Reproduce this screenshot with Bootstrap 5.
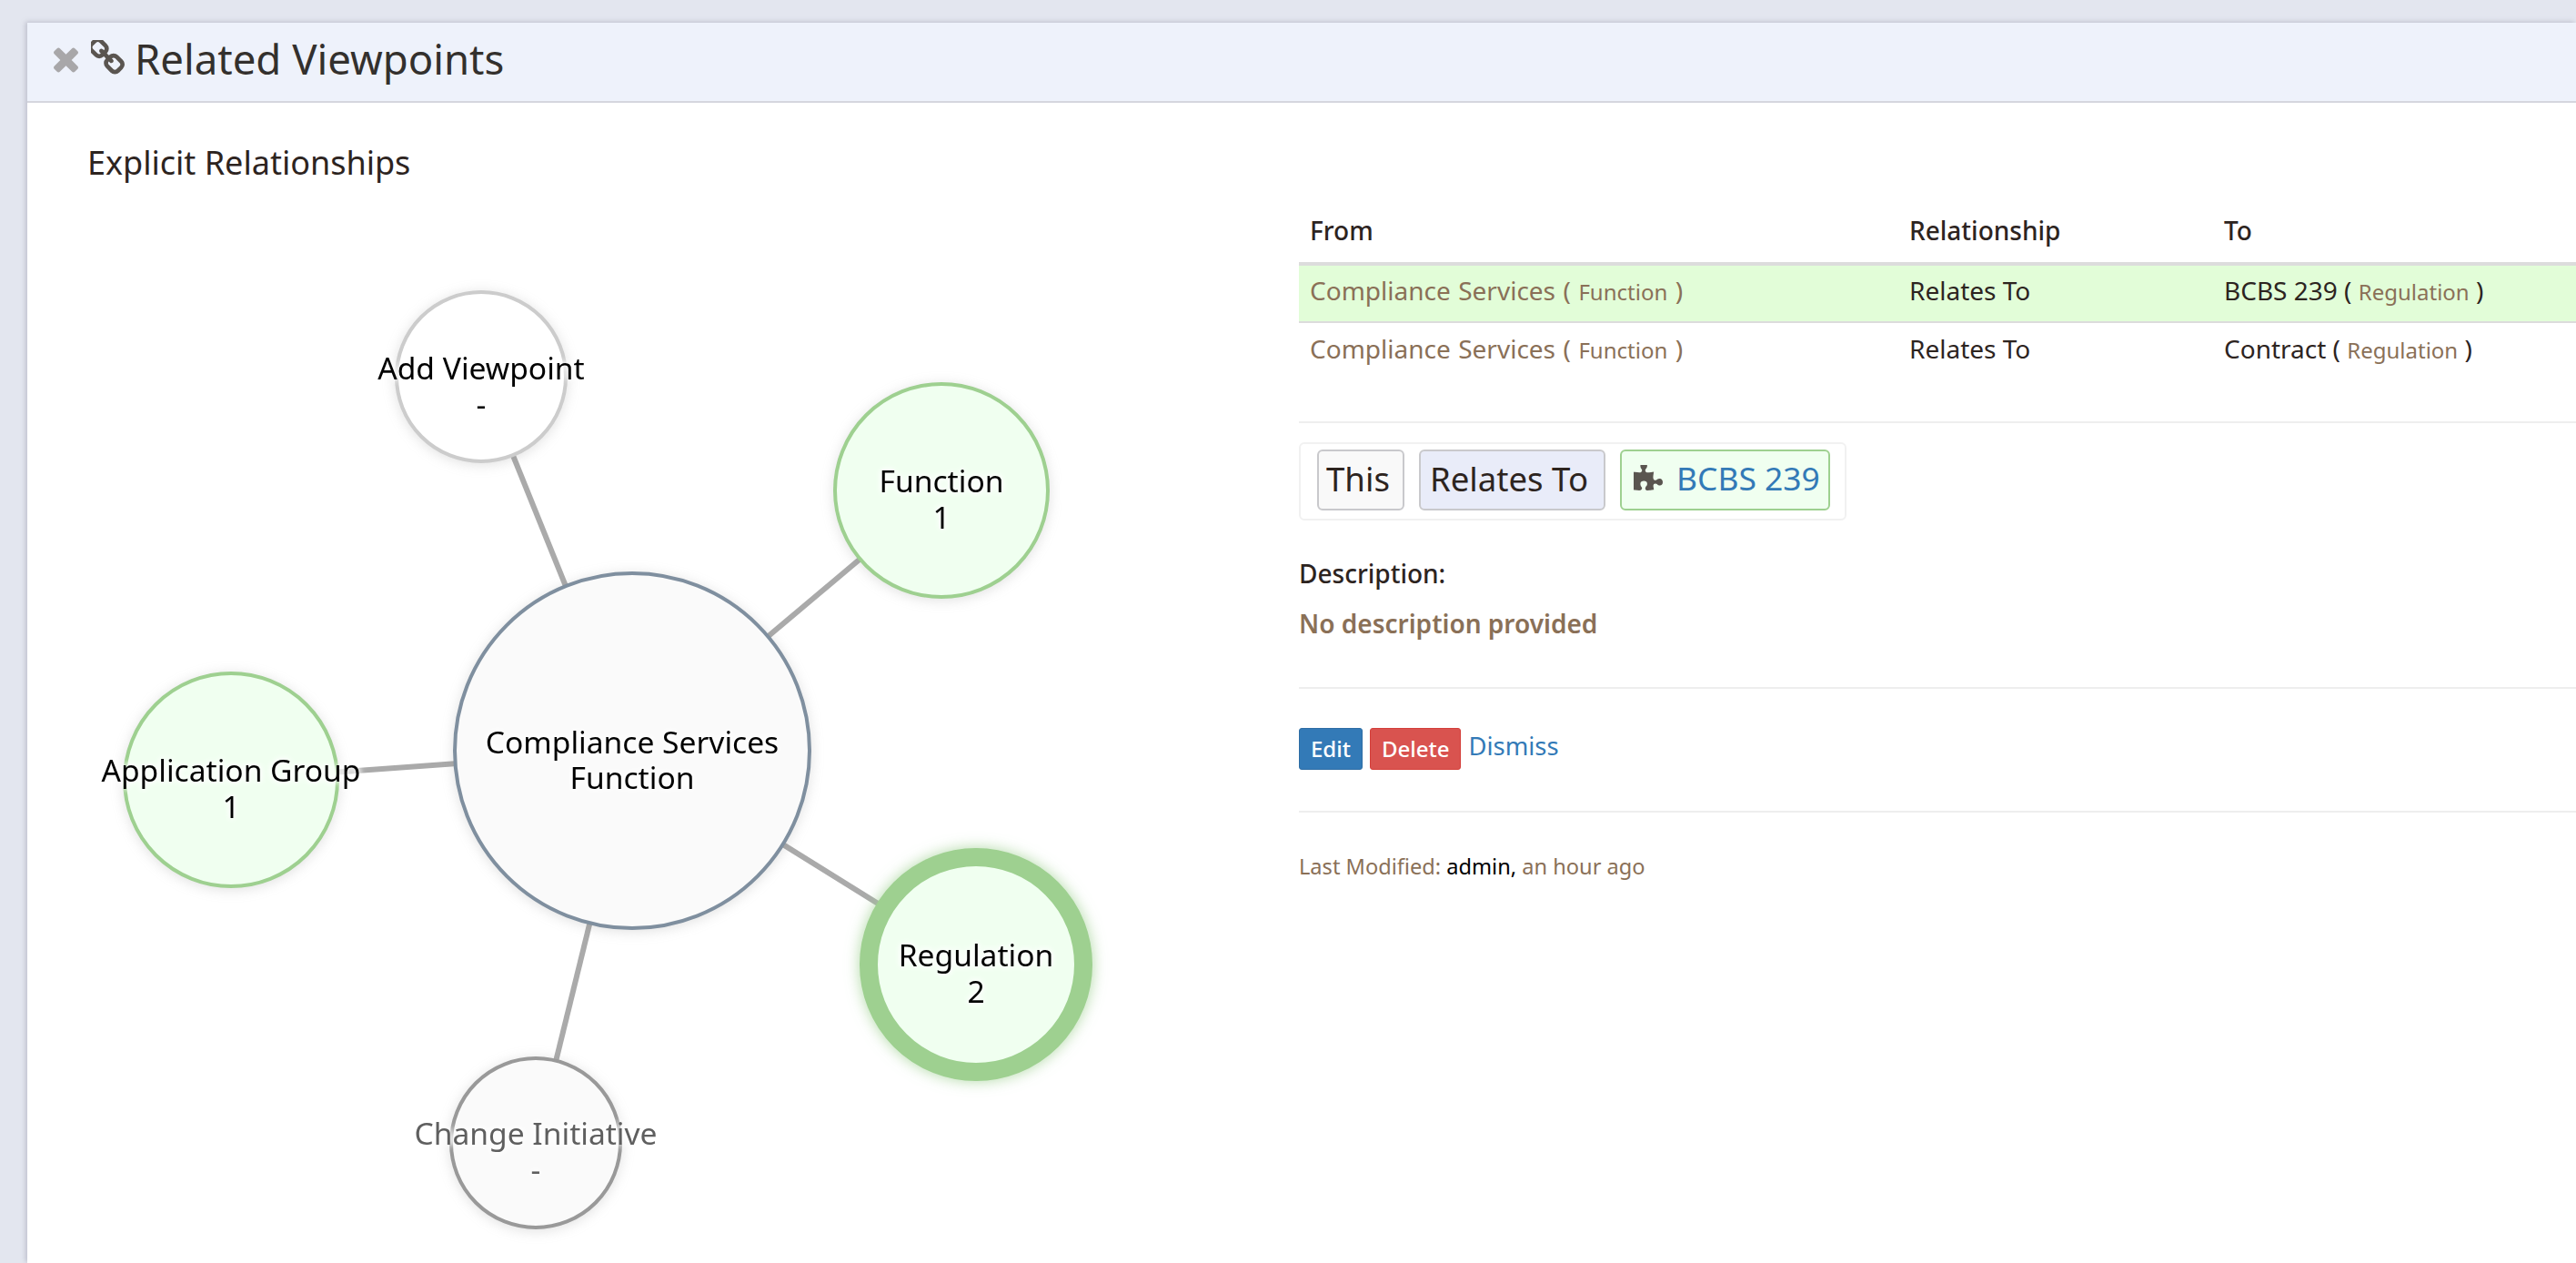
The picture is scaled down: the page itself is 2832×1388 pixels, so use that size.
<!DOCTYPE html>
<html lang="en">
<head>
    <meta charset="UTF-8">
    <title>Related Viewpoints</title>
    <link href="https://cdn.jsdelivr.net/npm/bootstrap@5.3.0/dist/css/bootstrap.min.css" rel="stylesheet">
    <style>
        html, body { height: 100%; overflow: hidden; }
        body { background: #e3e6ef; font-family: "Noto Sans", sans-serif; color: #2d241f; font-size: 28px; padding: 25px 0 0 30px; }
        .sheet { background: #fff; height: 100%; box-shadow: -2px -1px 5px rgba(120,120,140,.35); }
        .sheet-head { background: #eef2fb; height: 88px; border-bottom: 2px solid #d5d6de; padding-left: 29px; }
        .sheet-head h1 { font-size: 45.5px; font-weight: 400; margin: 0 0 0 11px; padding-bottom: 7px; color: #33302d; }
        .ico-x { width: 27px; height: 28px; fill: #a8a7a9; margin: -4px 14px 0 0; }
        .ico-link { width: 37px; height: 38px; fill: #5a5550; margin-top: -10px; }
        .graph-col { width: 1398px; flex: none; }
        .graph-col h2 { font-size: 36px; font-weight: 400; margin: 0; padding: 44px 0 0 66px; height: 117px; color: #2d241f; }
        .graph { display: block; }
        .graph text { font-size: 33.6px; text-anchor: middle; fill: #000; filter: drop-shadow(0 0 3px #fff) drop-shadow(0 0 3px #fff); }
        .graph text.dim { fill: #5f5f5f; }
        .edge { stroke: #aaa; stroke-width: 6px; }
        .bubble { filter: drop-shadow(0 2px 7px rgba(120,120,120,.22)); }
        .bubble-on { filter: drop-shadow(0 0 8px rgba(158,208,144,.8)); }
        .detail-col { flex: 1 1 auto; min-width: 0; padding-top: 110px; }
        .rel-table { margin: 0; --bs-table-bg: transparent; color: #2d241f; }
        .rel-table th, .rel-table td { padding: 0 12px; vertical-align: middle; border: 0; font-weight: 400; }
        .rel-table thead th { height: 67px; border-bottom: 4px solid #dcdcdc; font-weight: 500; padding-bottom: 6px; }
        .rel-table tbody td { height: 64px; padding-bottom: 8px; }
        .rel-table .on td { background: #e2fdd8; border-bottom: 2px solid #dcdcdc; }
        .rel-table td.brown { word-spacing: 1.2px; }
        .brown { color: #8a7057; }
        .kind { font-size: 24px; color: #8a7057; }
        .rule { border: 0; border-top: 2px solid #eee; opacity: 1; margin: 0; }
        .rule-top { margin-top: 45px; }
        .chips { display: inline-flex; gap: 16px; border: 2px solid #f1f1f1; border-radius: 6px; padding: 6px 16px 9px 18px; font-size: 36.6px; line-height: 1; margin: 21px 0 0; }
        .chip { border: 2px solid #c9c9cc; border-radius: 6px; height: 67px; padding: 0 0 3px; display: flex; align-items: center; }
        .chip-this { background: #f9f9f9; padding-left: 8px; padding-right: 14px; }
        .chip-rel { background: #e9ecf9; padding-left: 10px; padding-right: 17px; }
        .chip-to { background: #f0fff0; border-color: #9ed090; padding-left: 13px; padding-right: 9px; gap: 15px; font-size: 35.4px; }
        .chip-to a { color: #337ab7; text-decoration: none; }
        .ico-puzzle { width: 32px; height: 30px; fill: #5a5550; }
        .desc-label { font-size: 28px; font-weight: 500; margin: 38px 0 0; line-height: 40px; }
        .desc-text { font-size: 28px; font-weight: 600; color: #8a7057; margin: 14px 0 49px; line-height: 42px; }
        .actions { margin: 43px 0 45px; gap: 8px; }
        .actions .btn { font-size: 24px; font-weight: 500; padding: 0 12px; height: 46px; line-height: 42px; border-radius: 3px; }
        .btn-edit { background: #337ab7; border-color: #2e6da4; color: #fff; }
        .btn-del { background: #d9534f; border-color: #d43f3a; color: #fff; }
        .actions a.plain { color: #337ab7; text-decoration: none; font-size: 27.4px; line-height: 40px; }
        .stamp { font-size: 23.6px; color: #8a7057; margin: 42px 0 0; }
        .stamp b { font-weight: 400; color: #000; }
    </style>
</head>
<body>
    <div class="sheet">
        <div class="sheet-head d-flex align-items-center">
            <svg class="ico-x" viewBox="302 366 1188 1188"><path d="M1490 1322q0 40-28 68l-136 136q-28 28-68 28t-68-28l-294-294-294 294q-28 28-68 28t-68-28l-136-136q-28-28-28-68t28-68l294-294-294-294q-28-28-28-68t28-68l136-136q28-28 68-28t68 28l294 294 294-294q28-28 68-28t68 28l136 136q28 28 28 68t-28 68l-294 294 294 294q28 28 28 68z"/></svg>
            <svg class="ico-link" viewBox="144 144 1504 1504"><path d="M1456 1216q0-40-28-68l-208-208q-28-28-68-28-42 0-72 32 3 3 19 18.5t21.5 21.5 15 19 13 25.5 3.5 27.5q0 40-28 68t-68 28q-15 0-27.5-3.5t-25.5-13-19-15-21.5-21.5-18.5-19q-33 31-33 73 0 40 28 68l206 207q27 27 68 27 40 0 68-26l147-146q28-28 28-67zm-703-705q0-40-28-68l-206-207q-28-28-68-28-39 0-68 27l-147 146q-28 28-28 67 0 40 28 68l208 208q27 27 68 27 42 0 72-31-3-3-19-18.5t-21.5-21.5-15-19-13-25.5-3.5-27.5q0-40 28-68t68-28q15 0 27.5 3.5t25.5 13 19 15 21.5 21.5 18.5 19q33-31 33-73zm895 705q0 120-85 203l-147 146q-83 83-203 83-121 0-204-85l-206-207q-83-83-83-203 0-123 88-209l-88-88q-86 88-208 88-120 0-204-84l-208-208q-84-84-84-204t85-203l147-146q83-83 203-83 121 0 204 85l206 207q83 83 83 203 0 123-88 209l88 88q86-88 208-88 120 0 204 84l208 208q84 84 84 204z"/></svg>
            <h1>Related Viewpoints</h1>
        </div>
        <div class="d-flex">
            <div class="graph-col">
                <h2>Explicit Relationships</h2>
                <!-- page coords, offset by the viewBox -->
                <svg class="graph" width="1398" height="1158" viewBox="30 230 1398 1158">
                    <line class="edge" x1="695" y1="825" x2="529" y2="414"/>
                    <line class="edge" x1="695" y1="825" x2="1035" y2="539"/>
                    <line class="edge" x1="695" y1="825" x2="254" y2="857"/>
                    <line class="edge" x1="695" y1="825" x2="1073" y2="1060"/>
                    <line class="edge" x1="695" y1="825" x2="589" y2="1256"/>

                    <circle class="bubble" cx="529" cy="414" r="93" fill="#fff" stroke="#ccc" stroke-width="4"/>
                    <circle class="bubble" cx="1035" cy="539" r="117" fill="#f0fff0" stroke="#9ed090" stroke-width="4"/>
                    <circle class="bubble" cx="254" cy="857" r="117" fill="#f0fff0" stroke="#9ed090" stroke-width="4"/>
                    <circle class="bubble-on" cx="1073" cy="1060" r="118" fill="#f0fff0" stroke="#9ed090" stroke-width="20"/>
                    <circle class="bubble" cx="589" cy="1256" r="93" fill="#fafafa" stroke="#999" stroke-width="4"/>
                    <circle class="bubble" cx="695" cy="825" r="195" fill="#fafafa" stroke="#7f8f9f" stroke-width="4"/>

                    <text x="529" y="417">Add Viewpoint</text>
                    <text x="529" y="457">-</text>
                    <text x="1035" y="541">Function</text>
                    <text x="1035" y="581">1</text>
                    <text x="254" y="859">Application Group</text>
                    <text x="254" y="899">1</text>
                    <text x="695" y="828">Compliance Services</text>
                    <text x="695" y="867">Function</text>
                    <text x="1073" y="1062">Regulation</text>
                    <text x="1073" y="1102">2</text>
                    <text class="dim" x="589" y="1258">Change Initiative</text>
                    <text class="dim" x="589" y="1298">-</text>
                </svg>
            </div>
            <div class="detail-col">
                <table class="table rel-table">
                    <colgroup><col style="width:659px"><col style="width:346px"><col></colgroup>
                    <thead>
                        <tr><th>From</th><th>Relationship</th><th>To</th></tr>
                    </thead>
                    <tbody>
                        <tr class="on">
                            <td class="brown">Compliance Services ( <span class="kind">Function</span> )</td>
                            <td>Relates To</td>
                            <td>BCBS 239 ( <span class="kind">Regulation</span> )</td>
                        </tr>
                        <tr>
                            <td class="brown">Compliance Services ( <span class="kind">Function</span> )</td>
                            <td>Relates To</td>
                            <td>Contract ( <span class="kind">Regulation</span> )</td>
                        </tr>
                    </tbody>
                </table>
                <hr class="rule rule-top">
                <div class="chips">
                    <div class="chip chip-this">This</div>
                    <div class="chip chip-rel">Relates To</div>
                    <div class="chip chip-to">
                        <svg class="ico-puzzle" viewBox="0 128 1664 1536"><path d="M1664 1098q0 81-44.5 135t-123.5 54q-41 0-77.5-17.5t-59-38-56.5-38-71-17.5q-110 0-110 124 0 39 16 115t15 115v5q-22 0-33 1-34 3-97.5 11.5t-115.5 13.5-98 5q-61 0-103-26.5t-42-83.5q0-37 17.5-71t38-56.5 38-59 17.5-77.5q0-79-54-123.5t-135-44.5q-84 0-143 45.5t-59 127.5q0 43 15 83t33.5 64.5 33.5 53 15 50.5q0 45-46 89-37 35-117 35-95 0-245-24-9-2-27.5-4t-27.5-4l-13-2q-1 0-3-1-2 0-2-1v-1024q2 1 17.5 3.5t34 5 21.5 3.5q150 24 245 24 80 0 117-35 46-44 46-89 0-22-15-50.5t-33.5-53-33.5-64.5-15-83q0-82 59-127.5t144-45.5q80 0 134 44.5t54 123.5q0 41-17.5 77.5t-38 59-38 56.5-17.5 71q0 57 42 83.5t103 26.5q64 0 180-15t163-17v2q-1 2-3.5 17.5t-5 34-3.5 21.5q-24 150-24 245 0 80 35 117 44 46 89 46 22 0 50.5-15t53-33.5 64.5-33.5 83-15q82 0 127.5 59t45.5 143z"/></svg>
                        <a href="#">BCBS 239</a>
                    </div>
                </div>
                <p class="desc-label">Description:</p>
                <p class="desc-text">No description provided</p>
                <hr class="rule">
                <div class="actions d-flex align-items-start">
                    <button class="btn btn-edit">Edit</button>
                    <button class="btn btn-del">Delete</button>
                    <a class="plain" href="#">Dismiss</a>
                </div>
                <hr class="rule">
                <p class="stamp">Last Modified: <b>admin,</b> an hour ago</p>
            </div>
        </div>
    </div>
    <script src="https://cdn.jsdelivr.net/npm/bootstrap@5.3.0/dist/js/bootstrap.bundle.min.js"></script>
</body>
</html>
